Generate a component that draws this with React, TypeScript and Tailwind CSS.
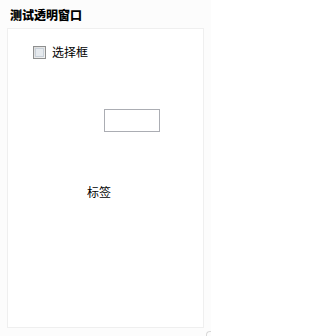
import React from 'react';

export default function App() {
    return (
        <div className="w-[211px] h-[336px] bg-[#fcfcfc] relative overflow-hidden" style={{ fontFamily: '"Noto Sans CJK SC", "Liberation Sans", sans-serif' }}>
            {/* Title bar */}
            <div className="h-[28px] pl-[10px] pt-[8px] text-[12px] leading-[14px] font-black text-black">测试透明窗口</div>

            {/* Client area */}
            <div className="mx-[7px] h-[300px] bg-white border border-[#efefef] flex flex-col">
                <label className="flex items-center mt-[16px] ml-[25px] gap-[6px] text-[12px] leading-[14px] text-black">
                    <span className="w-[13px] h-[13px] border border-[#8e8f8f] bg-gradient-to-br from-[#dcdcdc] to-[#f4f4f4] p-[1px]">
                        <span className="block w-full h-full border border-[#c8d0d8] bg-[#e6eaee]" />
                    </span>
                    选择框
                </label>

                <input className="mt-[50px] ml-[96px] w-[56px] h-[23px] border border-[#abadb3] bg-white outline-none" />

                <div className="mt-[53px] ml-[79px] text-[12px] leading-[14px] text-black">标签</div>
            </div>

            {/* Resize grip */}
            <div className="absolute right-0 bottom-0 w-[5px] h-[5px] border-t border-l border-[#d8d8d8] rounded-tl-[4px]" />
        </div>
    );
}
